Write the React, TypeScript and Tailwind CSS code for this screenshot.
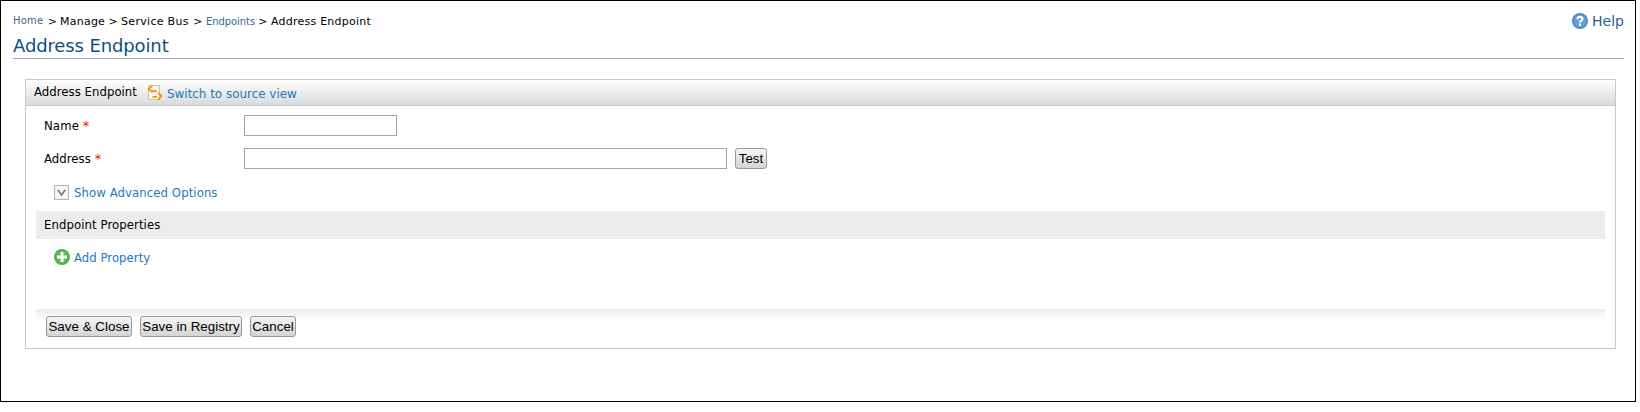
import type { ReactNode } from "react";

const cond = "font-['DejaVu_Sans_Condensed','DejaVu_Sans',sans-serif] [font-stretch:condensed]";

function Btn({ children, className }: { children: ReactNode; className: string }) {
  return (
    <button
      type="button"
      className={`h-[21px] shrink-0 rounded-[3px] border border-[#999] bg-linear-to-b from-[#f6f6f6] to-[#d4d4d4] text-center font-['Liberation_Sans',Arial,sans-serif] text-[13.33px] leading-[19px] tracking-[0.03px] whitespace-nowrap text-black ${className}`}
    >
      {children}
    </button>
  );
}

function Required() {
  return <span className="font-['DejaVu_Sans',sans-serif] text-[#ff0000] [font-stretch:normal]">*</span>;
}

function HelpIcon() {
  return (
    <svg width="16" height="16" viewBox="0 0 16 16">
      <circle cx="8" cy="8" r="8" fill="#4d88c6" />
      <circle cx="8" cy="8" r="6.5" fill="#659dd4" />
      <path d="M5.5 6.2C5.6 3 10.6 3.2 10.4 6C10.3 7.7 8.1 7.7 8 9.6" fill="none" stroke="#fff" strokeWidth="2.1" />
      <rect x="6.9" y="10.6" width="2.2" height="2.2" fill="#fff" />
    </svg>
  );
}

function SourceIcon() {
  return (
    <svg width="16" height="16" viewBox="0 0 16 16">
      <path d="M1.5 .5H12.5V14.5H1.5Z" fill="#f8f8ef" stroke="#c9c6a0" />
      <path d="M5.2 .8L1.6 3.9L5.2 7M5 6.2H9.8M5.5 11.9H10M11 7.6L14.5 11L11 14.9" fill="none" stroke="#f79420" strokeWidth="1.9" />
    </svg>
  );
}

function ExpandIcon() {
  return (
    <svg width="15" height="15" viewBox="0 0 15 15">
      <rect x=".5" y=".5" width="14" height="14" fill="#f0f0f0" stroke="#b8b8b8" />
      <rect x="2" y="2" width="11" height="11" fill="#fafafa" />
      <path d="M3.8 4.8L7.5 10L11.2 4.8" fill="none" stroke="#808080" strokeWidth="1.8" />
    </svg>
  );
}

function AddIcon() {
  return (
    <svg width="16" height="16" viewBox="0 0 16 16">
      <circle cx="8" cy="8" r="8" fill="#4fb14b" />
      <circle cx="8" cy="8" r="6.6" fill="#5dbb56" />
      <path d="M8 3V13M3 8H13" stroke="#fff" strokeWidth="3" />
    </svg>
  );
}

export default function App() {
  return (
    <div className="h-[412px] w-[1640px] bg-white">
      <div className="h-[402px] w-[1636px] border border-black pr-[11px] pl-3 font-['DejaVu_Sans',sans-serif] text-[11px] text-black">
        <header className="flex h-[58px] flex-col border-b border-[#8fa8c8]">
          <div className="flex h-8 shrink-0 items-start justify-between">
            <nav className="flex pt-[14px] leading-[14px] tracking-[0.24px] whitespace-pre">
              <a className={`${cond} -mt-px w-[34.8px] tracking-[0.3px] text-[#386698]`}>Home</a>
              <span className="w-[12.2px]">&gt;</span>
              <span className="w-[48.4px]">Manage</span>
              <span className="w-[12.7px]">&gt;</span>
              <span className="w-[72.3px] tracking-[0.3px]">Service Bus</span>
              <span className="w-[12.7px]">&gt;</span>
              <a className={`${cond} w-[52.3px] tracking-[-0.02px] text-[#386698]`}>Endpoints</a>
              <span className="w-[12.6px]">&gt;</span>
              <span>Address Endpoint</span>
            </nav>
            <a className="flex gap-1 pt-3 text-[14px] leading-[17px] text-[#2c6198]">
              <HelpIcon />
              Help
            </a>
          </div>
          <h1 className="shrink-0 text-[18px] leading-[25px] tracking-[-0.12px] text-[#0b4f80]">Address Endpoint</h1>
        </header>

        <section className="mt-5 mr-2 ml-3 h-[270px] border border-[#c9c9c9]">
          <div className={`flex h-[26px] border-b border-[#c9c9c9] bg-linear-to-b from-white to-[#d9dadc] pl-2 text-[13px] leading-4 ${cond}`}>
            <span className="w-[113px] pt-1 tracking-[0.04px]">Address Endpoint</span>
            <span className="w-5 pt-[5px]"><SourceIcon /></span>
            <a className="pt-1.5 font-['DejaVu_Sans',sans-serif] text-[12px] tracking-[-0.04px] text-[#2777bd] [font-stretch:normal]">Switch to source view</a>
          </div>

          <div className={`text-[13px] leading-4 ${cond}`}>
            <div className="flex h-[42px] pt-[9px] pl-[18px]">
              <label className="w-[200px] pt-[3px] tracking-[0.12px]">Name <Required /></label>
              <input className="h-[21px] w-[153px] border border-[#a5a5a5] bg-white" />
            </div>
            <div className="flex h-[37px] pl-[18px]">
              <label className="w-[200px] pt-[3px] tracking-[0.05px]">Address <Required /></label>
              <input className="mr-2 h-[21px] w-[483px] border border-[#a5a5a5] bg-white" />
              <Btn className="w-[32px]">Test</Btn>
            </div>
            <div className="flex h-[26px] gap-[5px] pl-7 tracking-[0.08px] text-[#2777bd]">
              <ExpandIcon />
              <a>Show Advanced Options</a>
            </div>
            <div className="mr-[10px] ml-[10px] h-7 bg-[#ececec] pt-1.5 pl-2 tracking-[0.08px]">Endpoint Properties</div>
            <div className="flex h-[70px] gap-1 pt-[10px] pl-7 tracking-[0.04px] text-[#2777bd]">
              <AddIcon />
              <a className="pt-px">Add Property</a>
            </div>
            <div className="mr-[10px] ml-[10px] flex h-[39px] gap-2 bg-[linear-gradient(to_bottom,#ededed_0px,#ffffff_11px)] pt-[7px] pl-[10px]">
              <Btn className="w-[86px]">Save &amp; Close</Btn>
              <Btn className="w-[102px]">Save in Registry</Btn>
              <Btn className="w-[46px]">Cancel</Btn>
            </div>
          </div>
        </section>
      </div>
    </div>
  );
}
